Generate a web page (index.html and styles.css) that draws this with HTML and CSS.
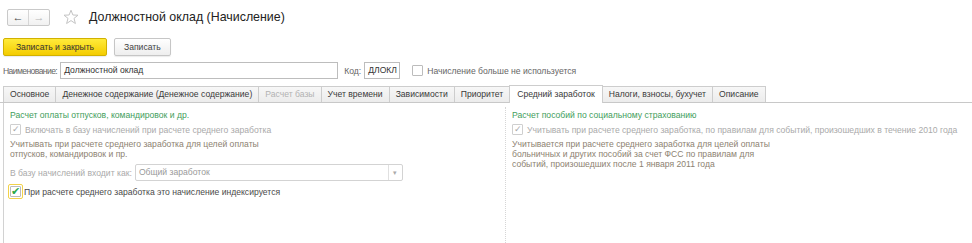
FILE: index.html
```html
<!DOCTYPE html>
<html lang="ru">
<head>
    <meta charset="UTF-8">
    <title>Должностной оклад (Начисление)</title>
    <link rel="stylesheet" href="styles.css">
</head>
<body>
    <!-- Header -->
    <div class="header">
        <div class="nav">
            <span class="nav-btn back">&#8592;</span>
            <span class="nav-btn fwd">&#8594;</span>
        </div>
        <svg class="star" width="16" height="16" viewBox="0 0 16 16">
            <path d="M8 1.2 L9.9 6 L15 6.2 L11 9.4 L12.4 14.5 L8 11.6 L3.6 14.5 L5 9.4 L1 6.2 L6.1 6 Z" fill="none" stroke="#c4c4c4" stroke-width="1"/>
        </svg>
        <h1 class="title">Должностной оклад (Начисление)</h1>
    </div>

    <!-- Command bar -->
    <div class="toolbar">
        <button class="btn btn-main">Записать и закрыть</button>
        <button class="btn">Записать</button>
    </div>

    <div class="name-row">
        <span class="lbl lbl-name">Наименование:</span>
        <div class="field field-name">Должностной оклад</div>
        <span class="lbl lbl-code">Код:</span>
        <div class="field field-code">ДЛОКЛ</div>
        <span class="check"></span>
        <span class="lbl">Начисление больше не используется</span>
    </div>

    <!-- Tabs -->
    <div class="tabs">
        <div class="tab">Основное</div>
        <div class="tab">Денежное содержание (Денежное содержание)</div>
        <div class="tab disabled">Расчет базы</div>
        <div class="tab">Учет времени</div>
        <div class="tab">Зависимости</div>
        <div class="tab">Приоритет</div>
        <div class="tab active">Средний заработок</div>
        <div class="tab">Налоги, взносы, бухучет</div>
        <div class="tab">Описание</div>
    </div>

    <div class="panel">
        <div class="col col-left">
            <div class="group-title">Расчет оплаты отпусков, командировок и др.</div>
            <div class="check-row off">
                <span class="check dis">&#10003;</span>
                Включать в базу начислений при расчете среднего заработка
            </div>
            <div class="note">Учитывать при расчете среднего заработка для целей оплаты<br>отпусков, командировок и пр.</div>
            <div class="combo-row">
                <span class="lbl off">В базу начислений входит как:</span>
                <div class="combo">
                    <span class="combo-val">Общий заработок</span>
                    <span class="combo-btn">&#9662;</span>
                </div>
            </div>
            <div class="check-row last">
                <span class="focus"><span class="check on">&#10004;</span></span>
                При расчете среднего заработка это начисление индексируется
            </div>
        </div>
        <div class="col col-right">
            <div class="group-title">Расчет пособий по социальному страхованию</div>
            <div class="check-row off">
                <span class="check dis">&#10003;</span>
                Учитывать при расчете среднего заработка, по правилам для событий, произошедших в течение 2010 года
            </div>
            <div class="note">Учитывается при расчете среднего заработка для целей оплаты<br>больничных и других пособий за счет ФСС по правилам для<br>событий, произошедших после 1 января 2011 года</div>
        </div>
    </div>
</body>
</html>
```

FILE: styles.css
```css
body {
    margin: 0;
    font-family: "Liberation Sans", Arial, sans-serif;
    font-size: 8.6px;
    color: #4a4a4a;
    background-color: #fff;
    overflow: hidden;
}

/* Header */
.header {
    display: flex;
    align-items: center;
    height: 18px;
    padding: 8px 0 0 7px;
}
.nav {
    display: flex;
    border: 1px solid #c9c9c9;
    border-radius: 2px;
    height: 15px;
    background: linear-gradient(#fff, #f1f1f1);
}
.nav-btn {
    width: 20px;
    text-align: center;
    font-size: 11px;
    line-height: 14px;
    color: #444;
}
.nav-btn.fwd {
    color: #b5b5b5;
    border-left: 1px solid #d6d6d6;
}
.star {
    margin-left: 13px;
}
.title {
    margin: 0 0 0 10px;
    font-size: 12.4px;
    font-weight: normal;
    color: #222;
}

/* Command bar */
.toolbar {
    display: flex;
    gap: 7px;
    padding: 12px 0 0 3px;
}
.btn {
    height: 18px;
    padding: 0 9px;
    font-family: inherit;
    font-size: 8.6px;
    color: #444;
    border: 1px solid #c6c6c6;
    border-radius: 2px;
    background: linear-gradient(#fff, #eee);
    box-shadow: 0 1px 1px rgba(0, 0, 0, 0.08);
}
.btn-main {
    width: 104px;
    color: #333;
    border-color: #d1b100;
    background: linear-gradient(#ffeb3b, #f4cc00);
}

.name-row {
    display: flex;
    align-items: center;
    height: 17px;
    margin-top: 6px;
    padding-left: 3px;
}
.lbl {
    color: #666;
}
.lbl-name {
    letter-spacing: -0.6px;
}
.lbl-code {
    margin-left: 6px;
}
.field {
    height: 15px;
    line-height: 15px;
    border: 1px solid #bdbdbd;
    padding: 0 3px;
    margin-left: 3px;
    color: #333;
}
.field-name {
    width: 270px;
}
.field-code {
    width: 28px;
}
.check {
    display: inline-block;
    width: 9px;
    height: 9px;
    border: 1px solid #bcbcbc;
    border-radius: 1px;
    margin: 0 4px 0 12px;
    font-size: 9px;
    line-height: 9px;
    text-align: center;
    background: #fff;
}

/* Tabs */
.tabs {
    display: flex;
    align-items: flex-end;
    height: 17px;
    margin-top: 6px;
    padding-left: 3px;
    border-bottom: 1px solid #c8c8c8;
}
.tab {
    height: 15px;
    line-height: 15px;
    padding: 0 6px;
    border: 1px solid #cdcdcd;
    border-bottom: none;
    margin-right: -1px;
    background: linear-gradient(#f7f7f7, #ececec);
    color: #3a3a3a;
    white-space: nowrap;
}
.tab.disabled {
    color: #b2b2b2;
}
.tab.active {
    height: 17px;
    line-height: 17px;
    margin-bottom: -1px;
    padding: 0 7px;
    background: #fff;
}

/* Panel */
.panel {
    display: flex;
    height: 150px;
    margin-left: 3px;
    border-left: 1px solid #d2d2d2;
}
.col {
    padding-top: 6px;
}
.col-left {
    width: 495px;
    padding-left: 6px;
}
.col-right {
    flex: 1;
    margin-top: 4px;
    padding-top: 2px;
    padding-left: 6px;
    border-left: 1px dotted #d6d6d6;
}
.group-title {
    color: #3f9e5c;
    line-height: 13px;
}
.check-row {
    display: flex;
    align-items: center;
    height: 15px;
    white-space: nowrap;
}
.check-row .check {
    margin: 0 4px 0 0;
}
.check-row.off {
    color: #aaa;
}
.check.dis {
    color: #a8a8a8;
    border-color: #cfcfcf;
}
.note {
    margin-top: 2px;
    line-height: 10px;
    color: #8d8271;
}
.combo-row {
    display: flex;
    align-items: center;
    margin-top: 5px;
}
.lbl.off {
    color: #aaa;
}
.combo {
    display: flex;
    justify-content: space-between;
    width: 266px;
    height: 15px;
    line-height: 15px;
    margin-left: 3px;
    border: 1px solid #d3d3d3;
    border-radius: 2px;
    color: #9a9a9a;
}
.combo-val {
    padding-left: 3px;
}
.combo-btn {
    width: 13px;
    text-align: center;
    font-size: 7px;
    border-left: 1px solid #e0e0e0;
    color: #aaa;
}
.focus {
    display: inline-flex;
    padding: 1px;
    margin: 0 1px 0 -2px;
    border: 1px solid #f2d24a;
    border-radius: 2px;
}
.check-row .focus .check {
    margin: 0;
}
.check.on {
    color: #2ba84a;
    font-size: 11px;
    line-height: 9px;
}
.check-row.last {
    margin-top: 2px;
    height: 17px;
}
```
